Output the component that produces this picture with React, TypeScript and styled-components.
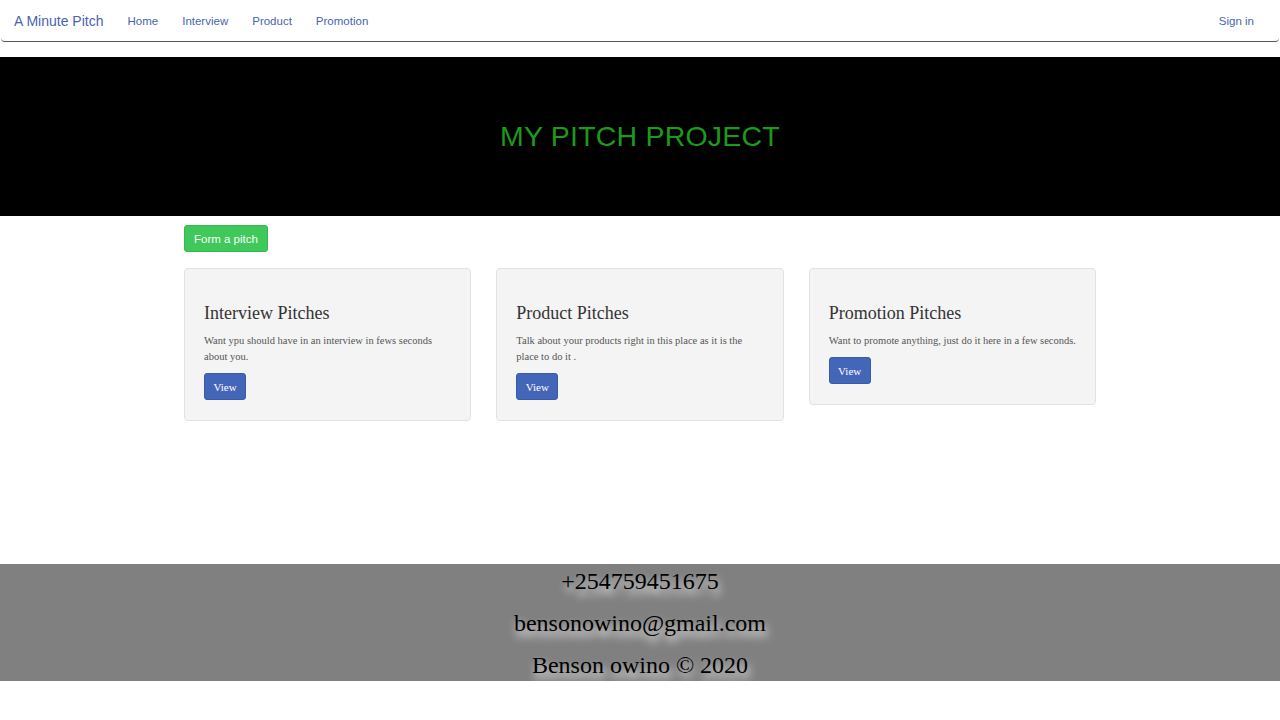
import styled, { createGlobalStyle } from "styled-components";

const GlobalStyle = createGlobalStyle`
  html, body {
    margin: 0;
    padding: 0;
    background: #fff;
    font-family: "Liberation Sans", Arial, sans-serif;
  }
  * { box-sizing: border-box; }
`;

const pitches = [
  {
    title: "Interview Pitches",
    text: "Want ypu should have in an interview in fews seconds about you.",
  },
  {
    title: "Product Pitches",
    text: "Talk about your products right in this place as it is the place to do it .",
  },
  {
    title: "Promotion Pitches",
    text: "Want to promote anything, just do it here in a few seconds.",
  },
];

const App = () => (
  <>
    <GlobalStyle />
    <Page>
      <NavBar>
        <Brand href="#">A Minute Pitch</Brand>
        <NavLinks>
          <NavLink href="#">Home</NavLink>
          <NavLink href="#">Interview</NavLink>
          <NavLink href="#">Product</NavLink>
          <NavLink href="#">Promotion</NavLink>
        </NavLinks>
        <SignIn href="#">Sign in</SignIn>
      </NavBar>

      <Jumbotron>
        <Heading>MY PITCH PROJECT</Heading>
      </Jumbotron>

      <Container>
        <FormButton>Form a pitch</FormButton>
        <CardRow>
          {pitches.map((p) => (
            <Card key={p.title}>
              <CardTitle>{p.title}</CardTitle>
              <CardText>{p.text}</CardText>
              <ViewButton>View</ViewButton>
            </Card>
          ))}
        </CardRow>
      </Container>

      <Footer>
        <FooterLine>+254759451675</FooterLine>
        <FooterLine>bensonowino@gmail.com</FooterLine>
        <FooterLine>Benson owino © 2020</FooterLine>
      </Footer>
    </Page>
  </>
);

export default App;

const Page = styled.div`
  width: 1280px;
  height: 720px;
  display: flex;
  flex-direction: column;
  overflow: hidden;
`;

const NavBar = styled.nav`
  height: 42px;
  flex-shrink: 0;
  display: flex;
  align-items: center;
  padding: 0 25px 0 13px;
  border-bottom: 1.5px solid #555;
  border-radius: 0 0 4px 4px;
  margin: 0 1px;
`;

const Brand = styled.a`
  font-size: 14px;
  color: #4a63b0;
  text-decoration: none;
  margin-right: 12px;
`;

const NavLinks = styled.div`
  display: flex;
  flex: 1;
`;

const NavLink = styled.a`
  font-size: 11.5px;
  color: #4a63b0;
  text-decoration: none;
  padding: 0 12px;
`;

const SignIn = styled(NavLink)`
  padding: 0;
`;

const Jumbotron = styled.header`
  margin-top: 15px;
  height: 159px;
  flex-shrink: 0;
  background: #000;
  display: flex;
  align-items: center;
  justify-content: center;
`;

const Heading = styled.h1`
  margin: 0;
  font-weight: 400;
  font-size: 28.5px;
  color: #1c9a1c;
  letter-spacing: 0.2px;
`;

const Container = styled.main`
  width: 912px;
  margin: 0 auto;
  padding-top: 9px;
  flex: 1;
`;

const FormButton = styled.button`
  height: 27px;
  padding: 0 9px;
  background: #3ec95a;
  color: #fff;
  border: 1px solid #36b850;
  border-radius: 3px;
  font-family: "Liberation Sans", Arial, sans-serif;
  font-size: 11.5px;
`;

const CardRow = styled.div`
  display: grid;
  grid-template-columns: repeat(3, 1fr);
  gap: 25px;
  align-items: start;
  margin-top: 16px;
`;

const Card = styled.section`
  background: #f4f4f4;
  border: 1px solid #e2e2e2;
  border-radius: 4px;
  padding: 34px 19px 20px;
  font-family: "Liberation Serif", "DejaVu Serif", serif;
`;

const CardTitle = styled.h3`
  margin: 0 0 9px;
  font-weight: 400;
  font-size: 18px;
  line-height: 21px;
  color: #333;
`;

const CardText = styled.p`
  margin: 0 0 8px;
  font-size: 10.5px;
  line-height: 16px;
  color: #555;
`;

const ViewButton = styled.button`
  height: 27px;
  width: 42px;
  background: #4466b8;
  color: #fff;
  border: 1px solid #3a5aa8;
  border-radius: 3px;
  font-family: "Liberation Serif", "DejaVu Serif", serif;
  font-size: 11px;
`;

const Footer = styled.footer`
  height: 117px;
  flex-shrink: 0;
  margin-bottom: 39px;
  background: #808080;
  display: flex;
  flex-direction: column;
  align-items: center;
  padding-top: 3px;
`;

const FooterLine = styled.p`
  margin: 0;
  height: 42px;
  flex-shrink: 0;
  font-family: "Liberation Serif", "Times New Roman", serif;
  font-size: 24px;
  line-height: 28px;
  color: #000;
  text-shadow: 2px 6px 8px #fff;
`;
